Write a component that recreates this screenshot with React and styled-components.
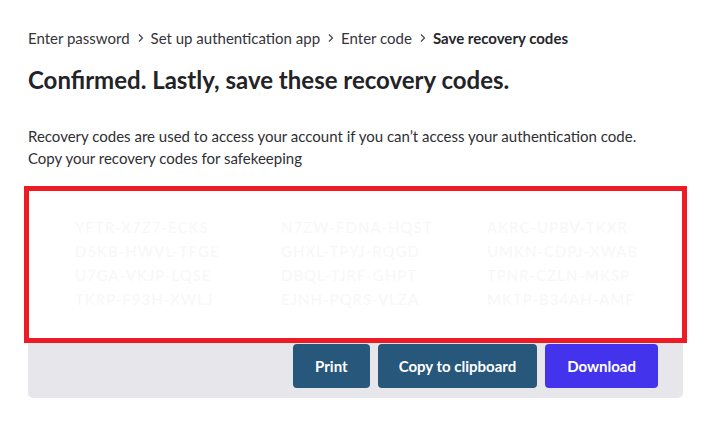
import React from "react";
import styled, { createGlobalStyle } from "styled-components";

const Global = createGlobalStyle`
  html, body { margin: 0; padding: 0; background: #ffffff; }
  body { font-family: Lato, "Noto Sans", Arial, sans-serif; color: #2e2e33; }
  * { box-sizing: border-box; }
`;

const Page = styled.div`
  padding: 27px 24px 0 28px;
  width: 707px;
`;

const Breadcrumb = styled.nav`
  display: flex;
  align-items: center;
  font-size: 15px;
  line-height: 22px;
  color: #34343a;
`;

const Crumb = styled.span`
  font-weight: ${(p) => (p.$current ? 700 : 400)};
  color: ${(p) => (p.$current ? "#26262b" : "#34343a")};
`;

const Sep = styled.span`
  display: inline-flex;
  align-items: center;
  margin: 0 6px 0 7px;
  color: #44444a;
`;

const Title = styled.h1`
  margin: 15px 0 0;
  font-size: 24px;
  line-height: 32px;
  font-weight: 700;
  color: #232327;
`;

const Text = styled.p`
  margin: 29px 0 0;
  font-size: 15px;
  line-height: 22px;
  color: #2f2f34;
`;

const Card = styled.div`
  margin-top: 21px;
  width: 655px;
  background: #e7e6ea;
  border-radius: 5px;
  padding-bottom: 10px;
`;

const CodesBox = styled.div`
  height: 149px;
  background: #ffffff;
  outline: 5px solid #ed1c24;
  outline-offset: -1px;
  padding: 25px 0 0 47px;
  display: grid;
  grid-template-columns: repeat(3, 206px);
  grid-auto-rows: 24px;
  position: relative;
`;

const Code = styled.span`
  font-size: 15px;
  line-height: 24px;
  letter-spacing: 1px;
  color: #f7f7f9;
  white-space: nowrap;
`;

const Actions = styled.div`
  display: flex;
  justify-content: flex-end;
  gap: 8px;
  padding: 5px 25px 0 0;
`;

const Button = styled.button`
  height: 44px;
  padding: 0 ${(p) => p.$px || 22}px;
  border: none;
  border-radius: 4px;
  background: ${(p) => (p.$primary ? "#4333ec" : "#27577a")};
  color: #ffffff;
  font-family: Lato, "Noto Sans", Arial, sans-serif;
  font-size: 15px;
  font-weight: 700;
  cursor: pointer;
`;

const Chevron = () => (
  <svg width="8" height="10" viewBox="0 0 8 10" fill="none">
    <path d="M2 1.5 L5.5 5 L2 8.5" stroke="currentColor" strokeWidth="1.2" />
  </svg>
);

const crumbs = ["Enter password", "Set up authentication app", "Enter code", "Save recovery codes"];

const codes = [
  "YFTR-X7Z7-ECKS", "N7ZW-FDNA-HQST", "AKRC-UPBV-TKXR",
  "D5KB-HWVL-TFGE", "GHXL-TPYJ-RQGD", "UMKN-CDPJ-XWAB",
  "U7GA-VKJP-LQSE", "DBQL-TJRF-GHPT", "TPNR-CZLN-MKSP",
  "TKRP-F93H-XWLJ", "EJNH-PQRS-VLZA", "MKTP-B34AH-AMF",
];

export default function App() {
  return (
    <>
      <Global />
      <Page>
        <Breadcrumb>
          {crumbs.map((c, i) => (
            <React.Fragment key={c}>
              {i > 0 && (
                <Sep>
                  <Chevron />
                </Sep>
              )}
              <Crumb $current={i === crumbs.length - 1}>{c}</Crumb>
            </React.Fragment>
          ))}
        </Breadcrumb>
        <Title>Confirmed. Lastly, save these recovery codes.</Title>
        <Text>
          Recovery codes are used to access your account if you can’t access your authentication code.
          <br />
          Copy your recovery codes for safekeeping
        </Text>
        <Card>
          <CodesBox>
            {codes.map((c) => (
              <Code key={c}>{c}</Code>
            ))}
          </CodesBox>
          <Actions>
            <Button>Print</Button>
            <Button $px={21}>Copy to clipboard</Button>
            <Button $primary>Download</Button>
          </Actions>
        </Card>
      </Page>
    </>
  );
}
